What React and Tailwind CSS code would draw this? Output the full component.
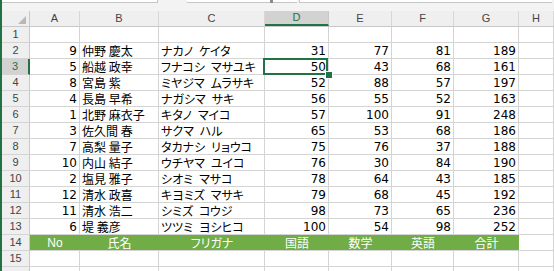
import React from 'react';

const COLS = ['A', 'B', 'C', 'D', 'E', 'F', 'G', 'H'];
const WIDTHS = ['w-[50px]', 'w-[79px]', 'w-[106px]', 'w-[64px]', 'w-[63px]', 'w-[62px]', 'w-[65px]', 'flex-1'];

// kana readings use an en space between family and given name
const DATA = [
  [9, '仲野 慶太', 'ナカノ\u2002ケイタ', 31, 77, 81, 189],
  [5, '船越 政幸', 'フナコシ\u2002マサユキ', 50, 43, 68, 161],
  [8, '宮島 紫', 'ミヤジマ\u2002ムラサキ', 52, 88, 57, 197],
  [4, '長島 早希', 'ナガシマ\u2002サキ', 56, 55, 52, 163],
  [1, '北野 麻衣子', 'キタノ\u2002マイコ', 57, 100, 91, 248],
  [3, '佐久間 春', 'サクマ\u2002ハル', 65, 53, 68, 186],
  [7, '高梨 量子', 'タカナシ\u2002リョウコ', 75, 76, 37, 188],
  [10, '内山 結子', 'ウチヤマ\u2002ユイコ', 76, 30, 84, 190],
  [2, '塩見 雅子', 'シオミ\u2002マサコ', 78, 64, 43, 185],
  [12, '清水 政喜', 'キヨミズ\u2002マサキ', 79, 68, 45, 192],
  [11, '清水 浩二', 'シミズ\u2002コウジ', 98, 73, 65, 236],
  [6, '堤 義彦', 'ツツミ\u2002ヨシヒコ', 100, 54, 98, 252],
];

const LABELS = ['No', '氏名', 'フリガナ', '国語', '数学', '英語', '合計'];

const jp = "font-['Noto_Sans_CJK_JP',sans-serif] text-[12px] [font-feature-settings:'palt']";
const num = "font-['DejaVu_Sans',sans-serif] text-[12px]";

function RowHeader({ n, active }) {
  return (
    <div
      className={`w-[28px] shrink-0 flex items-center justify-center border-b border-[#d4d4d4] font-['Liberation_Sans',sans-serif] text-[11px] ${
        active
          ? 'bg-[#d2d2d2] text-[#217346] border-r-2 border-r-[#217346]'
          : 'bg-[#efefef] text-[#444] border-r border-r-[#c8c8c8]'
      }`}
    >
      {n}
    </div>
  );
}

function Cell({ w, children, align = 'left', font = num, active }) {
  return (
    <div
      className={`${w} shrink-0 relative flex items-center pt-[1px] border-r border-b border-[#d4d4d4] overflow-visible whitespace-pre ${
        align === 'right' ? 'justify-end pr-[2px]' : 'pl-[2px]'
      } ${font} text-black`}
    >
      {children}
      {active && (
        <>
          <div className="absolute -left-[2px] -top-[1px] w-[65px] h-[17px] border-2 border-[#217346] z-10" />
          <div className="absolute left-[60px] top-[12px] w-[6px] h-[6px] bg-[#217346] border border-white z-20 box-content" />
        </>
      )}
    </div>
  );
}

export default function App() {
  return (
    <div className="w-[554px] h-[271px] overflow-hidden bg-white border-l-2 border-[#217346] flex flex-col">
      {/* formula bar remnants */}
      <div className="h-[11px] shrink-0 bg-[#f3f3f3] flex items-start">
        <div className="w-[156px] h-[3px] bg-white border-b border-r border-[#c6c6c6]" />
        <div className="w-[29px]" />
        <div className="w-[83px] h-[3px] bg-white border-b border-[#c6c6c6]" />
        <div className="w-[3px] h-[3px] bg-[#8a8a8a]" />
        <div className="w-[24px] h-[3px] bg-white border-b border-[#c6c6c6]" />
        <div className="w-[2px]" />
        <div className="flex-1 h-[3px] bg-white border-b border-l border-[#c6c6c6] mr-[2px]" />
      </div>

      {/* column headers */}
      <div className="h-[16px] shrink-0 flex bg-[#efefef] border-b border-[#c8c8c8]">
        <div className="w-[28px] shrink-0 relative border-r border-[#c8c8c8]">
          <div className="absolute right-[3px] bottom-[2px] w-0 h-0 border-l-[8px] border-l-transparent border-b-[8px] border-b-[#b8b8b8]" />
        </div>
        {COLS.map((c, i) => (
          <div
            key={c}
            className={`${WIDTHS[i]} shrink-0 flex items-center justify-center font-['Liberation_Sans',sans-serif] text-[11px] ${
              c === 'D'
                ? 'bg-[#d2d2d2] text-[#217346] border-b-2 border-[#217346] border-r border-r-[#c8c8c8]'
                : 'text-[#444] border-r border-[#d8d8d8]'
            }`}
          >
            {c}
          </div>
        ))}
      </div>

      {/* row 1 */}
      <div className="h-[16px] shrink-0 flex">
        <RowHeader n={1} />
        {WIDTHS.map((w, i) => (
          <Cell key={i} w={w} />
        ))}
      </div>

      {DATA.map((r, idx) => {
        const n = idx + 2;
        return (
          <div key={n} className="h-[16px] shrink-0 flex">
            <RowHeader n={n} active={n === 3} />
            <Cell w={WIDTHS[0]} align="right">{r[0]}</Cell>
            <Cell w={WIDTHS[1]} font={jp}>{r[1]}</Cell>
            <Cell w={WIDTHS[2]} font={jp}>{r[2]}</Cell>
            <Cell w={WIDTHS[3]} align="right" active={n === 3}>{r[3]}</Cell>
            <Cell w={WIDTHS[4]} align="right">{r[4]}</Cell>
            <Cell w={WIDTHS[5]} align="right">{r[5]}</Cell>
            <Cell w={WIDTHS[6]} align="right">{r[6]}</Cell>
            <Cell w={WIDTHS[7]} />
          </div>
        );
      })}

      {/* row 14: labels */}
      <div className="h-[16px] shrink-0 flex">
        <RowHeader n={14} />
        <div className="w-[489px] shrink-0 flex bg-[#70ad47] border-b border-[#d4d4d4] text-white">
          {LABELS.map((l, i) => (
            <div
              key={l}
              className={`${WIDTHS[i]} shrink-0 flex items-center justify-center pt-[1px] ${
                i === 0 ? "font-['Liberation_Sans',sans-serif] text-[12px]" : jp
              }`}
            >
              {l}
            </div>
          ))}
        </div>
        <Cell w={WIDTHS[7]} />
      </div>

      <div className="h-[16px] shrink-0 flex">
        <RowHeader n={15} />
        {WIDTHS.map((w, i) => (
          <Cell key={i} w={w} />
        ))}
      </div>

      {/* row 16, only its top edge shows */}
      <div className="h-[16px] shrink-0 flex">
        <div className="w-[28px] shrink-0 bg-[#efefef] border-r border-[#c8c8c8]" />
        {WIDTHS.map((w, i) => (
          <Cell key={i} w={w} />
        ))}
      </div>
    </div>
  );
}
